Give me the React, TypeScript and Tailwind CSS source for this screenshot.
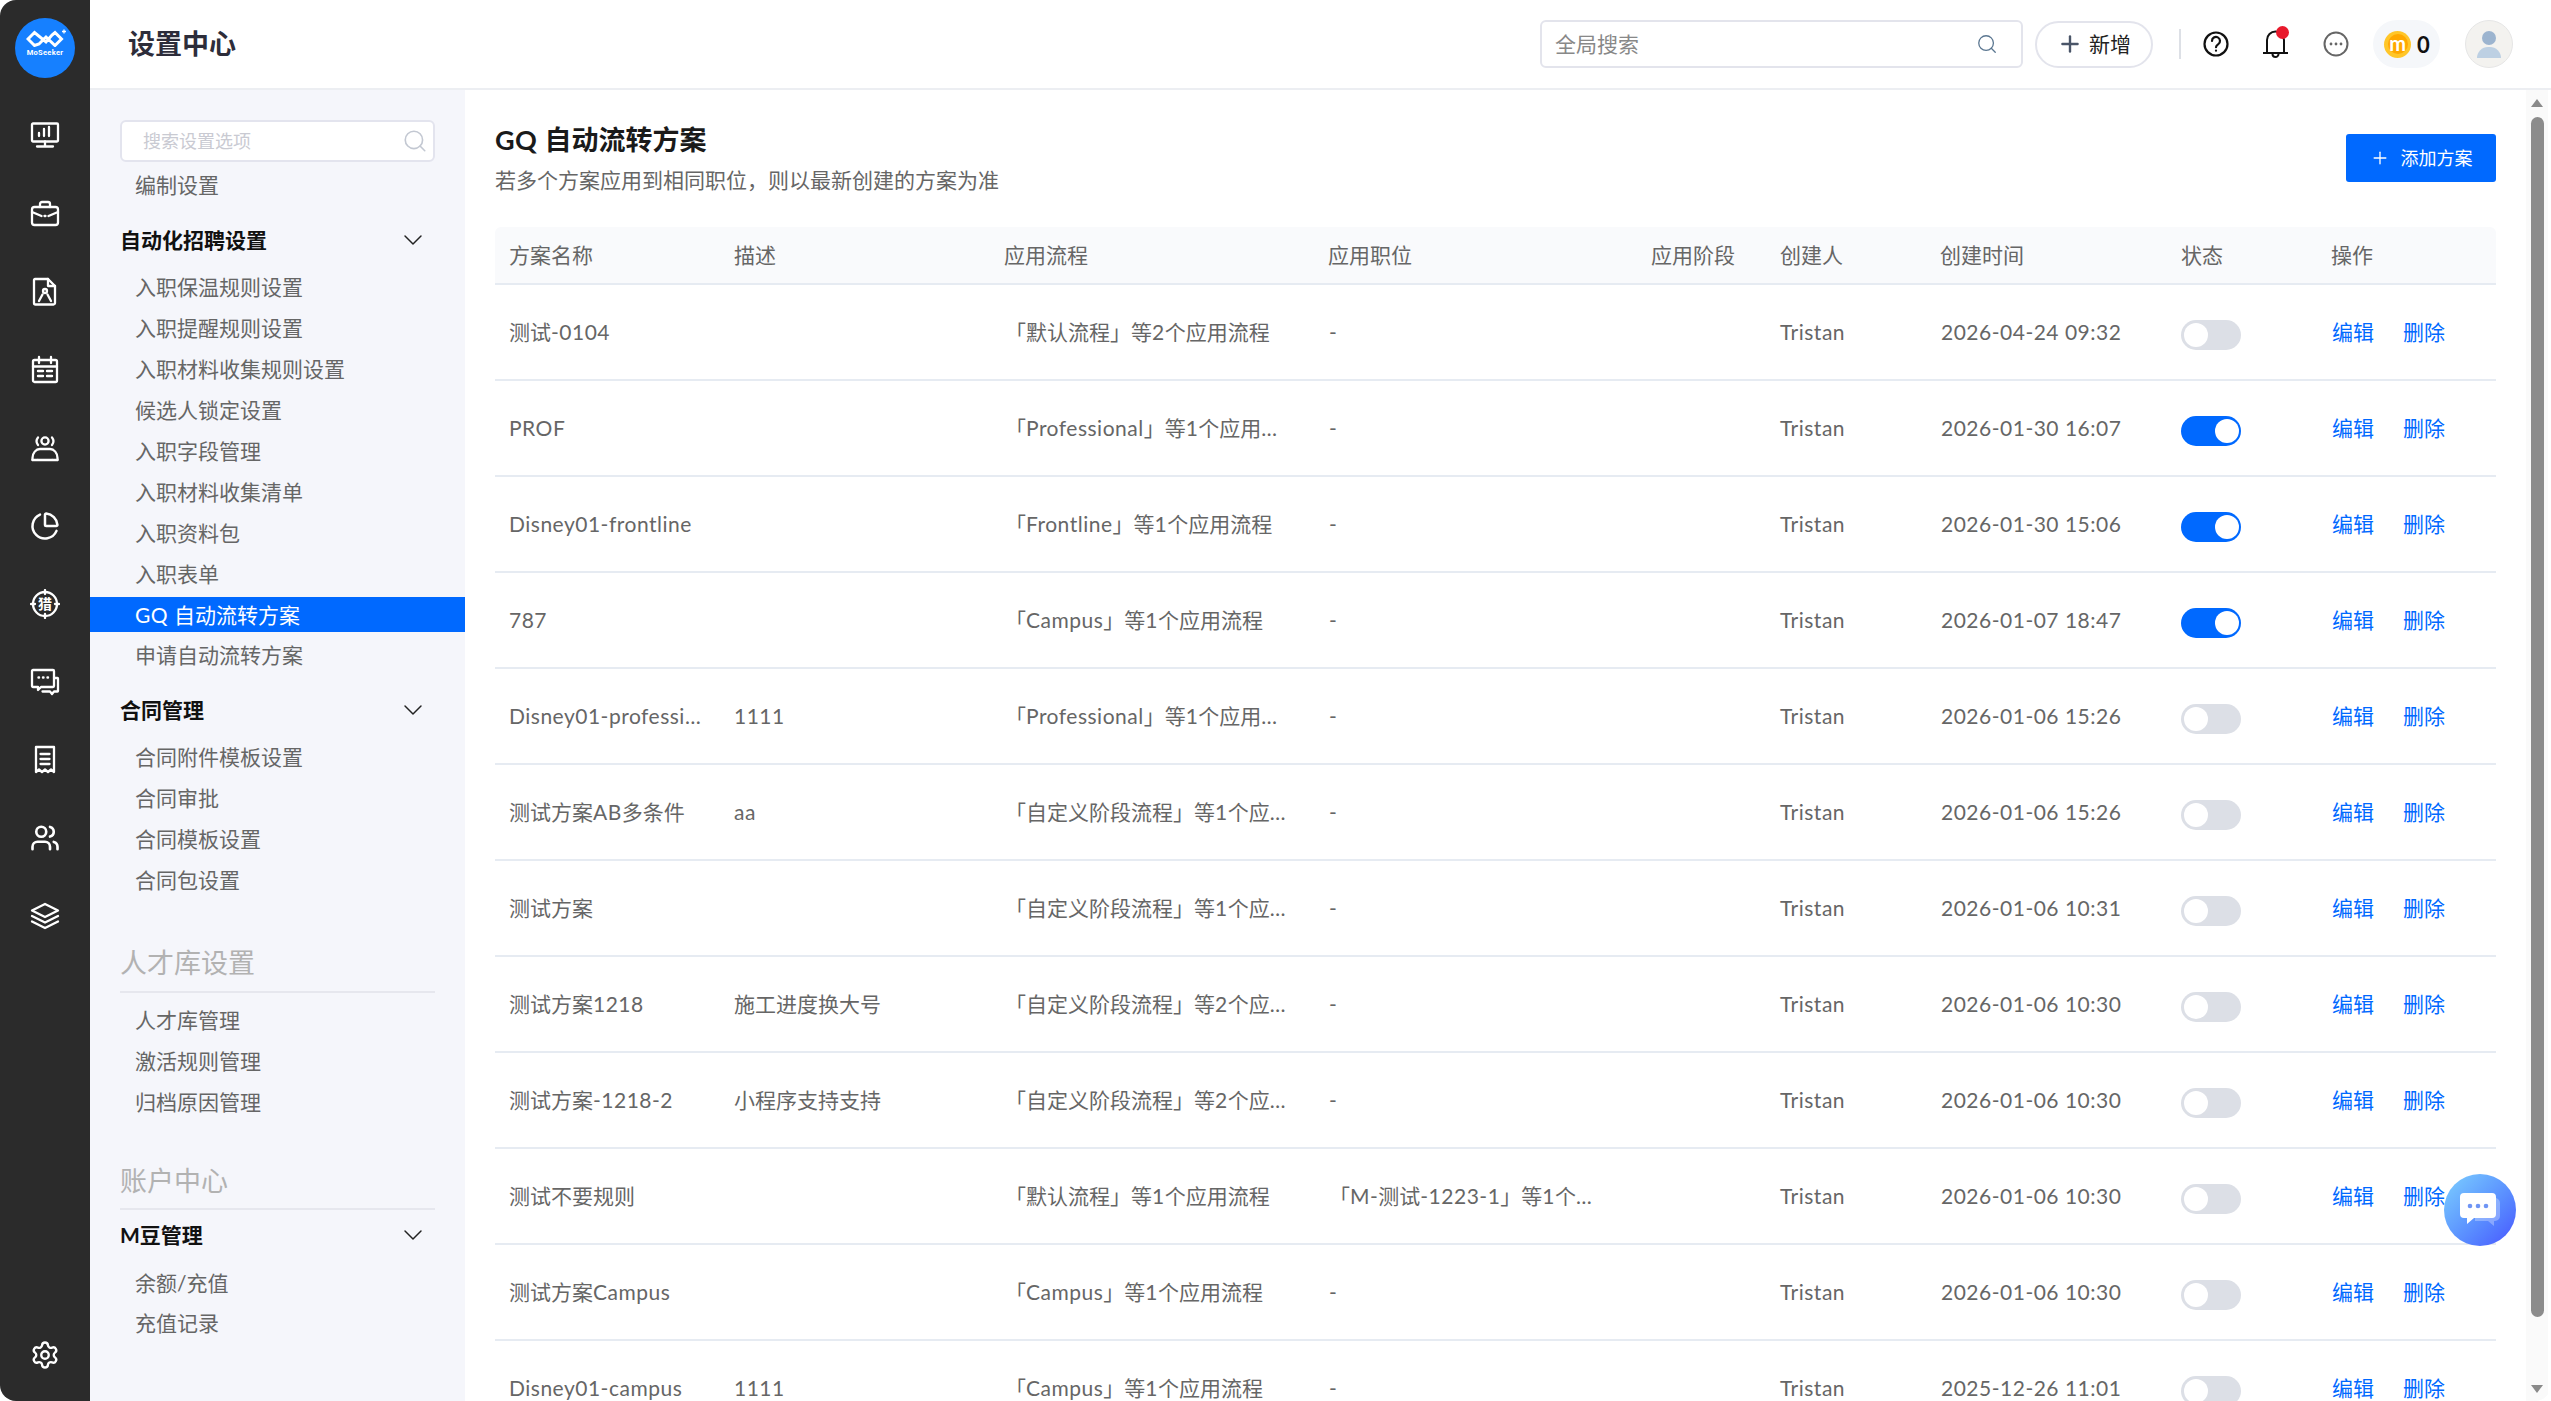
import React from "react";
import { ChartPie, Settings, Users, ChevronDown, Plus, Search } from "lucide-react";

type Row = { name: string; desc: string; flow: string; job: string; time: string; on: boolean };

const rows: Row[] = [
  { name: "测试-0104", desc: "", flow: "「默认流程」等2个应用流程", job: "-", time: "2026-04-24 09:32", on: false },
  { name: "PROF", desc: "", flow: "「Professional」等1个应用流程", job: "-", time: "2026-01-30 16:07", on: true },
  { name: "Disney01-frontline", desc: "", flow: "「Frontline」等1个应用流程", job: "-", time: "2026-01-30 15:06", on: true },
  { name: "787", desc: "", flow: "「Campus」等1个应用流程", job: "-", time: "2026-01-07 18:47", on: true },
  { name: "Disney01-professional", desc: "1111", flow: "「Professional」等1个应用流程", job: "-", time: "2026-01-06 15:26", on: false },
  { name: "测试方案AB多条件", desc: "aa", flow: "「自定义阶段流程」等1个应用流程", job: "-", time: "2026-01-06 15:26", on: false },
  { name: "测试方案", desc: "", flow: "「自定义阶段流程」等1个应用流程", job: "-", time: "2026-01-06 10:31", on: false },
  { name: "测试方案1218", desc: "施工进度换大号", flow: "「自定义阶段流程」等2个应用流程", job: "-", time: "2026-01-06 10:30", on: false },
  { name: "测试方案-1218-2", desc: "小程序支持支持", flow: "「自定义阶段流程」等2个应用流程", job: "-", time: "2026-01-06 10:30", on: false },
  { name: "测试不要规则", desc: "", flow: "「默认流程」等1个应用流程", job: "「M-测试-1223-1」等1个应用职位", time: "2026-01-06 10:30", on: false },
  { name: "测试方案Campus", desc: "", flow: "「Campus」等1个应用流程", job: "-", time: "2026-01-06 10:30", on: false },
  { name: "Disney01-campus", desc: "1111", flow: "「Campus」等1个应用流程", job: "-", time: "2025-12-26 11:01", on: false },
];

const cols = "grid grid-cols-[225px_270px_324px_323px_129px_160px_241px_150px_179px]";

/* Latin runs are set a little wider than the CJK around them */
function T({ s }: { s: string }) {
  const parts = s.split(/([A-Za-z0-9:\- ]+)/);
  return (
    <>
      {parts.map((p, i) =>
        i % 2 === 1 ? (
          <span key={i} className="tracking-[0.5px]">{p}</span>
        ) : (
          <React.Fragment key={i}>{p}</React.Fragment>
        )
      )}
    </>
  );
}

function Ico({ children }: { children: React.ReactNode }) {
  return (
    <svg width="30" height="30" viewBox="0 0 30 30" fill="none" stroke="white" strokeWidth="2.300" strokeLinecap="round" strokeLinejoin="round">
      {children}
    </svg>
  );
}

const railIcons: React.ReactNode[] = [
  <Ico key="a"><rect x="2" y="2.5" width="26" height="18" rx="1" /><path d="M9 15v-3M14 15V8M19 15V6" /><path d="M15 20.5v5M7 25.5h16" /></Ico>,
  <Ico key="b"><rect x="2" y="8" width="26" height="18" rx="2.5" /><path d="M10 8V5a2 2 0 0 1 2-2h6a2 2 0 0 1 2 2v3" /><path d="M2 13l9.5 4M28 13l-9.5 4" /><path d="M14.5 17h1" /></Ico>,
  <Ico key="c"><path d="M5 2h13l7 7v17a1.5 1.5 0 0 1-1.5 1.5h-18A1.5 1.5 0 0 1 4 26V3a1 1 0 0 1 1-1z" /><path d="M18 2v7h7" /><circle cx="15" cy="14" r="2" /><path d="M9 24l3.5-6.5M21 24l-3.5-6.5" /></Ico>,
  <Ico key="d"><rect x="3" y="5" width="24" height="22" rx="1.5" /><path d="M9 2v6M21 2v6M3 11.5h24" /><path d="M8 16h5M17 16h5M8 21h5M17 21h5" strokeWidth="2.4" /></Ico>,
  <Ico key="e"><circle cx="15" cy="8" r="3.6" /><path d="M8 4.5a6 6 0 0 0 0 7.5M22 4.5a6 6 0 0 1 0 7.5" /><path d="M2.5 27v-2c0-5 3.5-9 7.5-9h10c4 0 7.5 4 7.5 9v2" /><path d="M2.5 27h5M22.5 27h5M8 27h14" /></Ico>,
];

const railIcons2: React.ReactNode[] = [
  <Ico key="g"><circle cx="15" cy="15" r="12" /><path d="M1 15h4M25 15h4M15 1v4M15 25v4" /></Ico>,
  <Ico key="h"><path d="M3 3h20a1 1 0 0 1 1 1v15a1 1 0 0 1-1 1H11l-3 3v-3H3a1 1 0 0 1-1-1V4a1 1 0 0 1 1-1z" /><path d="M8.5 10.5h.5M13 10.5h.5M17.5 10.5h.5" strokeWidth="2.4" /><path d="M24 11h3.5a.5.5 0 0 1 .5.5V24a.5.5 0 0 1-.5.5H24l-2 2.5-2-2.5h-7.5" /></Ico>,
  <Ico key="i"><path d="M6 2h18v25l-3-2.5-3 2.5-3-2.5-3 2.5-3-2.5-3 2.5z" /><path d="M10.5 9h9M10.5 14h9M10.5 19h9" /></Ico>,
];

function Item({ label, active }: { label: string; active?: boolean }) {
  return (
    <div className={"h-[35px] shrink-0 mb-[5.9px] pl-[45px] leading-[35px] text-[21px] " + (active ? "bg-[#0069ff] text-white" : "text-[#666]")}>
      <T s={label} />
    </div>
  );
}

function Group({ label, mt }: { label: string; mt: string }) {
  return (
    <div className={"h-[35px] shrink-0 pl-[30px] pr-[36px] flex items-center justify-between mb-[12px] " + mt}>
      <span className="text-[21px] font-bold text-[#111]">{label}</span>
      <ChevronDown size={32} strokeWidth={1.1} className="text-[#222]" />
    </div>
  );
}

function Section({ label, mt, pb }: { label: string; mt: string; pb: string }) {
  return (
    <div className={"mx-[30px] shrink-0 border-b-2 border-[#e6e7ee] " + mt + " " + pb}>
      <div className="h-[40px] leading-[40px] text-[27px] text-[#b2b2b2]">{label}</div>
    </div>
  );
}

function Logo() {
  return (
    <div className="w-[60px] h-[60px] rounded-full bg-[#1680ff] flex flex-col items-center mt-[18px]">
      <svg width="40" height="18" viewBox="0 0 40 18" fill="none" stroke="white" strokeWidth="3" className="mt-[11px] ml-[1px]">
        <path d="M2 10l6.5-6.5L20 13l6 -7 3-2.5 6.5 6.5-6.5 6.500L20 8 13 15l-4.500 1.500z" strokeLinejoin="miter" />
        <path d="M36 2.500h4M38 .5v4" strokeWidth="1.300" />
      </svg>
      <span className="text-[7.500px] leading-[10px] font-bold text-white font-['Roboto',sans-serif] mt-[1px] tracking-[0.3px]">MoSeeker</span>
    </div>
  );
}

function Toggle({ on }: { on: boolean }) {
  return (
    <div className={"w-[60px] h-[30px] rounded-full mt-[5px] flex items-center " + (on ? "bg-[#0069ff] justify-end pr-[2px]" : "bg-[#dcdfe6] justify-start pl-[3px]")}>
      <div className="w-[24px] h-[24px] rounded-full bg-white" />
    </div>
  );
}

export default function App() {
  return (
    <div className="relative w-[2551px] h-[1401px] flex overflow-hidden rounded-[16px] bg-white font-['Lato','Noto_Sans_CJK_SC',sans-serif]">
      {/* Left rail */}
      <aside className="w-[90px] shrink-0 bg-[#2b2b2b] flex flex-col items-center">
        <Logo />
        <div className="mt-[18.500px] flex flex-col items-center">
          {railIcons.map((ic, i) => (
            <div key={i} className="h-[78px] flex items-center justify-center">{ic}</div>
          ))}
          <div className="h-[78px] flex items-center justify-center"><ChartPie size={30} strokeWidth={2} className="text-white" /></div>
          <div className="relative h-[78px] flex items-center justify-center">
            {railIcons2[0]}
            <span className="absolute inset-0 flex items-center justify-center text-white text-[14px] font-bold">猎</span>
          </div>
          {railIcons2.slice(1).map((ic, i) => (
            <div key={i} className="h-[78px] flex items-center justify-center">{ic}</div>
          ))}
          <div className="h-[78px] flex items-center justify-center"><Users size={30} strokeWidth={2.100} className="text-white" /></div>
          <div className="h-[78px] flex items-center justify-center">
            <Ico><path d="M15 3L28 9.500 15 16 2 9.500z" /><path d="M2 15l13 6.500L28 15M2 20.500L15 27l13-6.500" /></Ico>
          </div>
        </div>
        <div className="mt-auto mb-[31px]"><Settings size={30} strokeWidth={1.9} className="text-white" /></div>
      </aside>

      <div className="flex-1 flex flex-col min-w-0">
        {/* Header */}
        <header className="h-[90px] shrink-0 border-b-2 border-[#eceef2] flex items-center pl-[38px] pr-[38px] bg-white">
          <h1 className="text-[27px] font-bold text-[#2d2d3a]">设置中心</h1>
          <div className="ml-auto w-[483px] h-[48px] border-2 border-[#e3e4ec] rounded-[6px] flex items-center justify-between pl-[13px] pr-[23px] text-[21px] text-[#888]">
            <span>全局搜索</span>
            <Search size={22} strokeWidth={1.4} className="text-[#5a7690]" />
          </div>
          <div className="ml-[12px] w-[118px] h-[47px] border-2 border-[#e3e4ec] rounded-full flex items-center justify-center gap-[6px] text-[21px] text-[#222]">
            <Plus size={26} strokeWidth={2.200} className="text-[#4a5568]" />
            <span>新增</span>
          </div>
          <div className="ml-[26px] w-[2px] h-[30px] bg-[#dde0e6]" />
          <svg className="ml-[22px]" width="26" height="26" viewBox="0 0 26 26" fill="none" stroke="#111" strokeWidth="2.200" strokeLinecap="round">
            <circle cx="13" cy="13" r="11.500" />
            <path d="M9 10a4 4 0 1 1 6.300 3.200c-1.500 1-2.300 1.700-2.300 3" />
            <path d="M13 19.500v.2" />
          </svg>
          <div className="relative ml-[34px] w-[25px] h-[30px]">
            <svg width="25" height="30" viewBox="0 0 25 30" fill="none" stroke="#111" strokeWidth="2" strokeLinecap="round">
              <path d="M4 24V11a8.500 8.500 0 0 1 17 0v13" />
              <path d="M0.500 24h24" />
              <path d="M9.500 25a3 3 0 0 0 6 0" />
            </svg>
            <div className="absolute right-[-1px] top-[-3px] w-[13px] h-[13px] rounded-full bg-[#e8192c]" />
          </div>
          <svg className="ml-[35px]" width="26" height="26" viewBox="0 0 26 26" fill="none" stroke="#666" strokeWidth="2">
            <circle cx="13" cy="13" r="11.500" />
            <circle cx="8" cy="13" r="1.400" fill="#666" stroke="none" />
            <circle cx="13" cy="13" r="1.400" fill="#666" stroke="none" />
            <circle cx="18" cy="13" r="1.400" fill="#666" stroke="none" />
          </svg>
          <div className="ml-[24px] w-[67px] h-[48px] rounded-full bg-[#f5f7fa] flex items-center pl-[11px] gap-[6px]">
            <div className="w-[27px] h-[27px] rounded-full bg-[#ffc629] flex items-center justify-center">
              <div className="w-[20px] h-[20px] rounded-full bg-[#ffa800] flex items-center justify-center text-white font-bold text-[20px] leading-[20px] pb-[3px]">m</div>
            </div>
            <span className="text-[22px] font-bold text-[#111]">0</span>
          </div>
          <div className="ml-[25px] w-[48px] h-[48px] rounded-full bg-[#f3f2ef] border border-[#e6e6e6] flex flex-col items-center justify-center">
            <div className="w-[14px] h-[14px] rounded-full bg-[#9cb4cf]" />
            <div className="w-[24px] h-[11px] rounded-t-[11px] bg-[#bdd0e3] mt-[2px]" />
          </div>
        </header>

        <div className="flex-1 flex min-h-0">
          {/* Settings menu */}
          <nav className="w-[375px] shrink-0 bg-[#f5f6fb] pt-[30px] overflow-hidden flex flex-col">
            <div className="mx-[30px] shrink-0 h-[42px] border-2 border-[#e3e4ee] rounded-[6px] bg-white flex items-center justify-between pl-[21px] pr-[5px] text-[18px] text-[#c9cad2]">
              <span>搜索设置选项</span>
              <Search size={26} strokeWidth={1.5} className="text-[#c3c8d2]" />
            </div>
            <div className="mt-[4.500px]"><Item label="编制设置" /></div>
            <Group label="自动化招聘设置" mt="mt-[15px]" />
            {["入职保温规则设置", "入职提醒规则设置", "入职材料收集规则设置", "候选人锁定设置", "入职字段管理", "入职材料收集清单", "入职资料包", "入职表单"].map((t) => <Item key={t} label={t} />)}
            <Item label="GQ 自动流转方案" active />
            <Item label="申请自动流转方案" />
            <Group label="合同管理" mt="mt-[14px]" />
            {["合同附件模板设置", "合同审批", "合同模板设置", "合同包设置"].map((t) => <Item key={t} label={t} />)}
            <Section label="人才库设置" mt="mt-[40px]" pb="pb-[8px]" />
            <div className="mt-[9.500px]">{["人才库管理", "激活规则管理", "归档原因管理"].map((t) => <Item key={t} label={t} />)}</div>
            <Section label="账户中心" mt="mt-[36px]" pb="pb-[7px]" />
            <Group label="M豆管理" mt="mt-[7.500px]" />
            {["余额/充值", "充值记录"].map((t) => <Item key={t} label={t} />)}
          </nav>

          {/* Content */}
          <main className="flex-1 min-w-0 overflow-hidden pl-[30px] pr-[30px] pt-[32px]">
            <div className="flex justify-between items-start">
              <div>
                <div className="text-[27px] leading-[36px] font-bold text-[#1a1a1a]"><T s="GQ 自动流转方案" /></div>
                <div className="text-[21px] leading-[36px] mt-[4px] text-[#666]">若多个方案应用到相同职位，则以最新创建的方案为准</div>
              </div>
              <button className="mt-[12px] w-[150px] h-[48px] rounded-[3px] bg-[#0069ff] text-white text-[18px] flex items-center justify-center gap-[11px]">
                <Plus size={20} strokeWidth={1.6} />
                <span>添加方案</span>
              </button>
            </div>

            <div className="mt-[29px] text-[21px] text-[#666]">
              <div className={cols + " h-[58px] items-center bg-[#f9fafc] border-b-2 border-[#e6ebf2] rounded-t-[6px]"}>
                {["方案名称", "描述", "应用流程", "应用职位", "应用阶段", "创建人", "创建时间", "状态", "操作"].map((h) => (
                  <div key={h} className="pl-[14px]">{h}</div>
                ))}
              </div>
              {rows.map((r, i) => (
                <div key={i} className={cols + " h-[96px] items-center border-b-2 border-[#e6ebf2]"}>
                  <div className="pl-[14px] pr-[14px] truncate"><T s={r.name} /></div>
                  <div className="pl-[14px] truncate"><T s={r.desc} /></div>
                  <div className="pl-[15px] pr-[28px] truncate"><T s={r.flow} /></div>
                  <div className="pl-[15px] pr-[28px] truncate"><T s={r.job} /></div>
                  <div />
                  <div className="pl-[14px]"><T s="Tristan" /></div>
                  <div className="pl-[15px]"><T s={r.time} /></div>
                  <div className="pl-[14px]"><Toggle on={r.on} /></div>
                  <div className="pl-[15px] flex gap-[29px] text-[#0069ff]">
                    <span>编辑</span>
                    <span>删除</span>
                  </div>
                </div>
              ))}
            </div>
          </main>

          {/* Scrollbar */}
          <div className="w-[25px] shrink-0 pr-[3px]">
            <div className="w-[22px] h-full bg-[#fafafa] flex flex-col items-center pt-[9px]">
              <div className="w-0 h-0 border-x-[6px] border-x-transparent border-b-[8px] border-b-[#8a8a8a]" />
              <div className="w-[13px] h-[1200px] mt-[10px] rounded-full bg-[#8c8c8c]" />
              <div className="w-0 h-0 mt-[68px] border-x-[6px] border-x-transparent border-t-[8px] border-t-[#8a8a8a]" />
            </div>
          </div>
        </div>
      </div>

      {/* Floating chat button */}
      <div className="absolute left-[2444px] top-[1174px] w-[72px] h-[72px] rounded-full bg-gradient-to-br from-[#7fd0ff] to-[#4a52ff] flex items-center justify-center">
        <svg width="42" height="36" viewBox="0 0 42 36">
          <path d="M16 6h20a5 5 0 0 1 5 5v13a5 5 0 0 1-5 5h-1v5l-6-5H16z" fill="#ffffff" opacity="0.3" />
          <path d="M5 1h28a4 4 0 0 1 4 4v17a4 4 0 0 1-4 4H15l-7 6v-6H5a4 4 0 0 1-4-4V5a4 4 0 0 1 4-4z" fill="#ffffff" />
          <circle cx="11" cy="14" r="2.300" fill="#6f95f5" />
          <circle cx="19" cy="14" r="2.300" fill="#6f95f5" />
          <circle cx="27" cy="14" r="2.300" fill="#6f95f5" />
        </svg>
      </div>
    </div>
  );
}
